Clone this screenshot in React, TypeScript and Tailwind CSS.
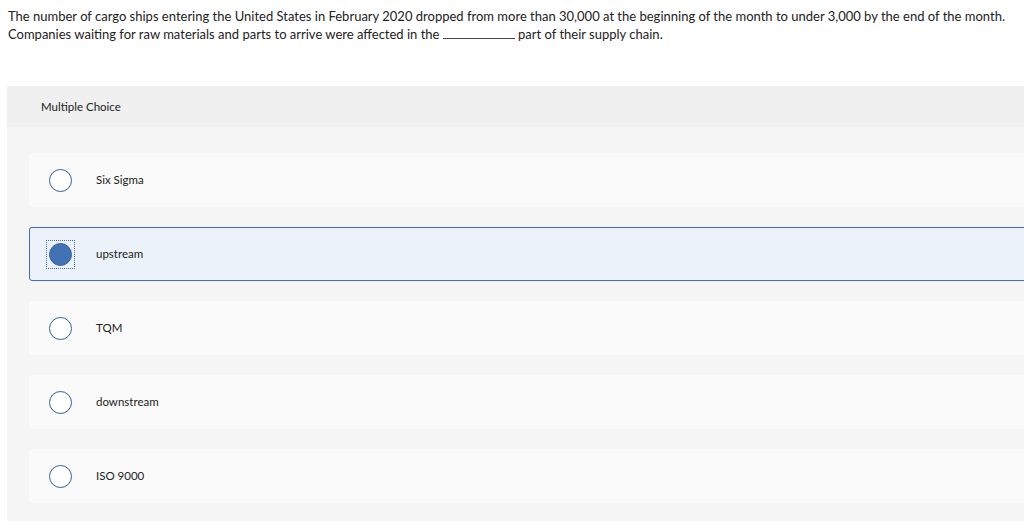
import React from "react";

const options = ["Six Sigma", "upstream", "TQM", "downstream", "ISO 9000"];

export default function App() {
  return (
    <div className="w-[1024px] h-[521px] overflow-hidden bg-white text-[#1f1f1f]" style={{ fontFamily: "Lato, 'Noto Sans', sans-serif" }}>
      <div className="pl-[8px] pt-[7px] text-[13px] leading-[18px] text-[#222]">
        <p>
          The number of cargo ships entering the United States in February 2020 dropped from more than 30,000 at the beginning of the month to under 3,000 by the end of the month.
        </p>
        <p>
          Companies waiting for raw materials and parts to arrive were affected in the{" "}
          <span className="inline-block w-[72px] border-b border-[#444] align-baseline"></span>{" "}
          part of their supply chain.
        </p>
      </div>
      <div className="ml-[7px] mt-[43px] w-[1100px] bg-[#f5f5f5]">
        <div className="h-[41px] bg-[#f0f0f0] flex items-center pl-[34px] text-[11.5px] text-[#222]">
          Multiple Choice
        </div>
        <div className="pl-[22px] pt-[26px] pb-[20px] flex flex-col gap-[20px]">
          {options.map((o, i) => {
            const sel = i === 1;
            return (
              <div
                key={o}
                className={
                  sel
                    ? "h-[54px] flex items-center pl-[19px] rounded-[3px] border border-[#3f6fb0] bg-[#ebf2fa]"
                    : "h-[54px] flex items-center pl-[20px] rounded-[3px] bg-[#fafafa]"
                }
              >
                {sel ? (
                  <div className="w-[23px] h-[23px] relative flex items-center justify-center">
                    <div className="absolute -inset-[3px] border border-dotted border-[#3f6fb0]"></div>
                    <div className="w-[23px] h-[23px] rounded-full bg-[#4372b4] border border-[#3c67a5]"></div>
                  </div>
                ) : (
                  <div className="w-[23px] h-[23px] rounded-full border border-[#2f5f9e] bg-white"></div>
                )}
                <span className="ml-[24px] text-[11.5px] text-[#222]">{o}</span>
              </div>
            );
          })}
        </div>
      </div>
    </div>
  );
}
